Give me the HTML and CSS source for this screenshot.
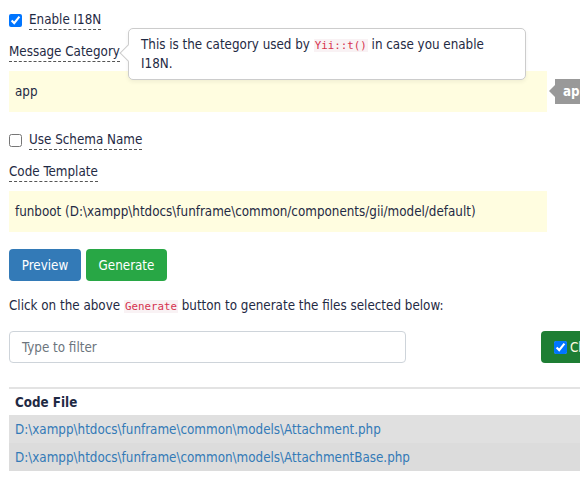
FILE: index.html
```html
<!DOCTYPE html>
<html>
<head>
<meta charset="utf-8">
<link rel="stylesheet" href="styles.css">
</head>
<body>
<div class="page">
  <div class="check-row first">
    <input type="checkbox" class="cb" checked>
    <span class="hint">Enable I18N</span>
  </div>
  <div class="field">
    <div class="label-row">
      <span class="hint">Message Category</span>
      <div class="tooltip">
        <span class="tip-arrow"></span>
        This is the category used by <code>Yii::t()</code> in case you enable I18N.
      </div>
    </div>
    <div class="sticky-row">
      <div class="sticky">app</div>
      <div class="badge">app</div>
    </div>
  </div>
  <div class="check-row">
    <input type="checkbox" class="cb">
    <span class="hint">Use Schema Name</span>
  </div>
  <div class="field">
    <div class="label-row"><span class="hint">Code Template</span></div>
    <div class="sticky-row">
      <div class="sticky">funboot (D:\xampp\htdocs\funframe\common/components/gii/model/default)</div>
    </div>
  </div>
  <div class="btns">
    <button class="btn blue">Preview</button>
    <button class="btn green">Generate</button>
  </div>
  <p class="note">Click on the above <code>Generate</code> button to generate the files selected below:</p>
  <div class="filter-row">
    <div class="filter">Type to filter</div>
    <div class="check-all"><input type="checkbox" class="cb" checked><span>Check all</span></div>
  </div>
  <table class="files">
    <thead><tr><th>Code File</th></tr></thead>
    <tbody>
      <tr class="r1"><td><a>D:\xampp\htdocs\funframe\common\models\Attachment.php</a></td></tr>
      <tr class="r2"><td><a>D:\xampp\htdocs\funframe\common\models\AttachmentBase.php</a></td></tr>
    </tbody>
  </table>
</div>
</body>
</html>
```
FILE: styles.css
```css
html, body {
  margin: 0;
  padding: 0;
  overflow: hidden;
  background: #fff;
}
body {
  font-family: "DejaVu Sans Condensed", "DejaVu Sans", sans-serif;
  font-size: 13.3px;
  color: #1f2a44;
}
.page {
  width: 700px;
  padding: 0 0 0 9px;
}
.check-row {
  display: flex;
  align-items: center;
  height: 20px;
  gap: 7px;
}
.check-row.first { margin-top: 10px; }
.cb {
  margin: 0;
  width: 13px;
  height: 13px;
  accent-color: #0075ff;
}
.hint {
  border-bottom: 1px dashed #555;
  line-height: 17px;
  padding-bottom: 1px;
}
.field { margin-top: 13px; }
.label-row {
  position: relative;
  display: flex;
  height: 21px;
  align-items: flex-start;
}
.tooltip {
  position: absolute;
  left: 119px;
  top: -15px;
  width: 372px;
  padding: 7px 12px 6px 12px;
  background: #fff;
  border: 1px solid #ccc;
  border-radius: 5px;
  line-height: 18px;
  box-shadow: 0 2px 4px rgba(0,0,0,0.06);
  z-index: 2;
}
.tip-arrow {
  position: absolute;
  left: -7px;
  top: 18px;
  width: 11px;
  height: 11px;
  background: #fff;
  border-left: 1px solid #ccc;
  border-bottom: 1px solid #ccc;
  transform: rotate(45deg);
}
code {
  font-family: "DejaVu Sans Mono", monospace;
  font-size: 10.8px;
  color: #d6334f;
  background: #f9f2f4;
  padding: 0 1px;
}
.sticky-row {
  display: flex;
  align-items: center;
  margin-top: 7px;
}
.sticky {
  width: 526px;
  height: 41px;
  padding: 0 6px;
  background: #fffde0;
  display: flex;
  align-items: center;
  flex-shrink: 0;
}
.badge {
  position: relative;
  margin-left: 8px;
  height: 25px;
  padding: 0 8px;
  background: #999;
  color: #fff;
  font-weight: bold;
  border-radius: 0 3px 3px 0;
  display: flex;
  align-items: center;
}
.badge::before {
  content: "";
  position: absolute;
  left: -6px;
  top: 6px;
  border-right: 6px solid #999;
  border-top: 6px solid transparent;
  border-bottom: 6px solid transparent;
}
.field + .check-row { margin-top: 18px; }
.btns {
  display: flex;
  gap: 5px;
  margin-top: 17px;
}
.btn {
  font-family: inherit;
  font-size: 13.3px;
  height: 32px;
  border: none;
  border-radius: 4px;
  color: #fff;
  padding: 0 12px;
}
.blue { background: #337ab7; width: 72px; }
.green { background: #28a745; width: 81px; }
.note {
  margin: 15px 0 0 0;
  line-height: 19px;
}
.filter-row {
  display: flex;
  align-items: center;
  margin-top: 15px;
}
.filter {
  width: 371px;
  height: 30px;
  border: 1px solid #ced4da;
  border-radius: 4px;
  padding: 0 12px;
  display: flex;
  align-items: center;
  color: #6c757d;
}
.check-all {
  margin-left: 135px;
  height: 32px;
  width: 120px;
  padding-left: 13px;
  background: #1e7e34;
  border-radius: 4px;
  display: flex;
  align-items: center;
  gap: 3px;
  color: #fffbe0;
}
.files {
  margin-top: 24px;
  width: 640px;
  border-collapse: collapse;
  border-top: 2px solid #e3e3e3;
}
.files th {
  text-align: left;
  font-weight: bold;
  height: 26px;
  padding: 0 6px;
  background: #fff;
}
.files td {
  height: 28px;
  padding: 0 6px;
}
.r1 { background: #e0e0e0; }
.r2 { background: #dcdcdc; }
.files a { color: #337ab7; }
```
